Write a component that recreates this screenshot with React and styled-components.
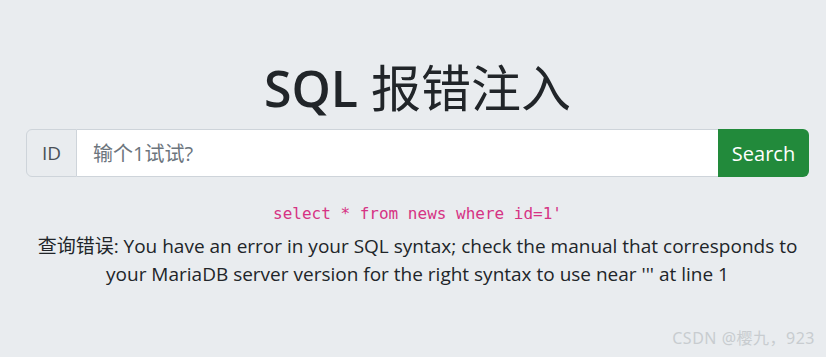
import { styled, createGlobalStyle } from "styled-components";

const GlobalStyle = createGlobalStyle`
  html, body {
    margin: 0;
    padding: 0;
    background: #e9ecef;
  }
  body {
    font-family: "Open Sans", "Noto Sans CJK SC", sans-serif;
    color: #212529;
  }
`;

const App = () => {
  return (
    <>
      <GlobalStyle />
      <Page>
        <Title>
          <Latin>SQL</Latin> 报错注入
        </Title>

        <SearchGroup>
          <Addon>ID</Addon>
          <SearchInput placeholder="输个1试试?" />
          <SearchButton>Search</SearchButton>
        </SearchGroup>

        <Result>
          <Query>select * from news where id=1'</Query>
          <ErrorText>
            查询错误: You have an error in your SQL syntax; check the manual that
            corresponds to your MariaDB server version for the right syntax to use
            near ''' at line 1
          </ErrorText>
        </Result>

        <Watermark>CSDN @樱九，923</Watermark>
      </Page>
    </>
  );
};

const Page = styled.div`
  position: relative;
  width: 826px;
  height: 357px;
  box-sizing: border-box;
  padding: 58px 17px 0 26px;
  display: flex;
  flex-direction: column;
  align-items: stretch;
`;

const Title = styled.h1`
  margin: 0 0 11px;
  font-size: 50px;
  font-weight: 400;
  line-height: 60px;
  text-align: center;
  color: #212529;
  font-family: "Open Sans", "Noto Sans CJK SC", sans-serif;
`;

const Latin = styled.span`
  font-weight: 600;
`;

const SearchGroup = styled.div`
  display: flex;
  height: 48px;
  width: 783px;
`;

const Addon = styled.span`
  width: 51px;
  box-sizing: border-box;
  display: flex;
  align-items: center;
  justify-content: center;
  font-size: 19px;
  color: #495057;
  background: #e9ecef;
  border: 1px solid #ced4da;
  border-radius: 6px 0 0 6px;
`;

const SearchInput = styled.input`
  flex: 1;
  min-width: 0;
  box-sizing: border-box;
  padding: 0 16px;
  font-size: 20px;
  font-family: "Open Sans", "Noto Sans CJK SC", sans-serif;
  color: #495057;
  background: #fff;
  border: 1px solid #ced4da;
  border-left: none;
  border-right: none;
  outline: none;

  &::placeholder {
    color: #6c757d;
  }
`;

const SearchButton = styled.button`
  width: 91px;
  border: none;
  border-radius: 0 6px 6px 0;
  background: #228a3b;
  color: #fff;
  font-size: 20px;
  font-family: "Open Sans", sans-serif;
  cursor: pointer;
`;

const Result = styled.div`
  margin-top: 25px;
  display: flex;
  flex-direction: column;
  align-items: center;
  text-align: center;
`;

const Query = styled.code`
  font-family: "DejaVu Sans Mono", "Liberation Mono", monospace;
  font-size: 16px;
  line-height: 24px;
  color: #d63384;
`;

const ErrorText = styled.p`
  margin: 6px 0 0;
  width: 770px;
  font-size: 19px;
  line-height: 28px;
  color: #212529;
`;

const Watermark = styled.span`
  position: absolute;
  right: 11px;
  bottom: 8px;
  font-size: 16px;
  letter-spacing: 0.5px;
  color: #c8ccd0;
  font-family: "Noto Sans", "Noto Sans CJK SC", sans-serif;
`;

export default App;
